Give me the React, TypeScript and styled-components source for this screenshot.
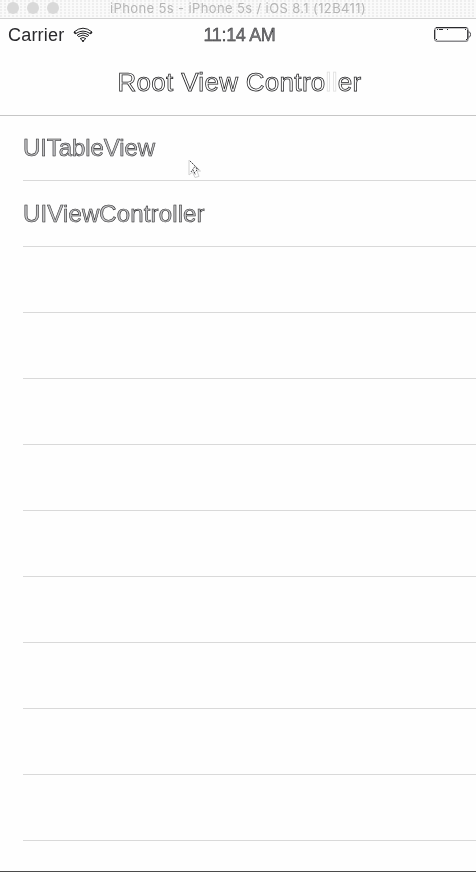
import React from "react";
import styled, { createGlobalStyle } from "styled-components";

const GlobalStyle = createGlobalStyle`
  * { box-sizing: border-box; }
  body { margin: 0; background: #fefefe; overflow: hidden; }
`;

const Window = styled.div`
  position: relative;
  display: flex;
  flex-direction: column;
  width: 476px;
  height: 872px;
  background: #fefefe;
  border-bottom: 1px solid #4b4b4b;
  font-family: "Liberation Sans", Arial, sans-serif;
  color: #29292c;
`;

/* Own layer, so that glyph edges are smoothed in grey. */
const Screen = styled.div`
  display: flex;
  flex: 1;
  flex-direction: column;
  will-change: transform, opacity;
  opacity: 0.999;
`;

const TitleBar = styled.header`
  display: grid;
  grid-template-columns: 60px 1fr 60px;
  align-items: center;
  flex: none;
  height: 19px;
  padding-bottom: 2px;
  border-bottom: 1px solid #d2d2d2;
  background-color: #fafafa;
  background-image: radial-gradient(circle at 1px 1px, #eeeeee 0.8px, transparent 1px);
  background-size: 4px 3px;
`;

const Lights = styled.div`
  display: flex;
  gap: 8px;
  padding-left: 7px;
`;

const Light = styled.span`
  width: 12px;
  height: 12px;
  border-radius: 50%;
  background: #d9d9d9;
`;

const Line = styled.svg`
  display: block;
  overflow: visible;
`;

const WindowTitle = styled.div`
  text-align: center;
  font: 400 13px/16px Inter, sans-serif;
  letter-spacing: 0.38px;
  color: #b5b5b5;
  white-space: nowrap;
`;

const StatusBar = styled.div`
  display: grid;
  grid-template-columns: 1fr auto 1fr;
  align-items: center;
  flex: none;
  height: 31px;
  padding: 0 5px 0 8px;
  font-size: 18px;
  line-height: 31px;
`;

const Carrier = styled.div`
  display: flex;
  align-items: center;
  gap: 9px;
  height: 31px;
  letter-spacing: 0.2px;
`;

const CarrierName = styled.span`
  padding-top: 2px;
`;

const Clock = styled.div`
  padding-top: 1px;
  height: 31px;
  line-height: 30px;
  letter-spacing: -0.35px;
  color: #77777a;
  -webkit-text-stroke: 0.35px #1c1c1e;
`;

const BatterySlot = styled.div`
  display: flex;
  justify-content: flex-end;
`;

const NavBar = styled.h1`
  flex: none;
  height: 66px;
  margin: 0;
  padding-left: 3px;
  border-bottom: 1px solid #c6c6c6;
  text-align: center;
  font-size: 26px;
  font-weight: 400;
  line-height: 64px;
  letter-spacing: 0.3px;
  color: #fefefe;
  -webkit-text-stroke: 0.75px #1c1c1e;
`;

const FadedLetters = styled.span`
  -webkit-text-stroke-color: #dedede;
`;

const Table = styled.ul`
  flex: 1;
  margin: 0;
  padding: 0 0 0 23px;
  list-style: none;
`;

const Cell = styled.li`
  height: 66px;
  border-bottom: 1px solid #d9d9d9;
  font-size: 24px;
  line-height: 65px;
  color: #c4c4c6;
  -webkit-text-stroke: 0.55px #1c1c1e;

  &:first-child {
    height: 65px;
    line-height: 63px;
  }
`;

const CellLabel = styled.span<{ $tracking: number }>`
  letter-spacing: ${(p) => p.$tracking}px;
`;

const Pointer = styled.svg`
  position: absolute;
  left: 187px;
  top: 158px;
`;

const rows = [
  { label: "UITableView", tracking: -0.1 },
  { label: "UIViewController", tracking: 0.13 },
  ...Array.from({ length: 9 }, () => ({ label: "", tracking: 0 })),
];

function WifiIcon() {
  return (
    <Line width="20" height="14" viewBox="0 0 20 14" fill="none" stroke="#1c1c1e" strokeWidth="1">
      <path d="M1 4Q10-3.6 19 4L17.3 5.6Q10 0.6 2.7 5.6Z" />
      <path d="M4.2 7.2Q10 2.9 15.8 7.2L14.3 8.6Q10 5.6 5.7 8.6Z" />
      <path d="M7.2 10.6Q10 8.4 12.8 10.6L10 13.2Z" />
      <path d="M1 4.2L2.8 5.6M19 4.2L17.2 5.6M9 13H11" strokeWidth="1.7" />
    </Line>
  );
}

function BatteryIcon() {
  return (
    <Line width="37" height="15" viewBox="0 0 37 15" fill="none">
      <rect x="0.8" y="0.8" width="33" height="13.4" rx="2" stroke="#8a8a8d" strokeWidth="1.4" />
      <path d="M2 0.5H32.5M0.6 3V12M33.8 3V12" stroke="#29292c" />
      <path d="M3 2.5H4M5 2.5H9M13 2.5H14M31 2.5H32M2 12.5H3M32 12.5H33" stroke="#29292c" />
      <path d="M34.5 5H35.2Q36.5 5 36.5 7.5T35.2 10H34.5" stroke="#444447" />
    </Line>
  );
}

export default function App() {
  return (
    <>
      <GlobalStyle />
      <Window>
        <Screen>
          <TitleBar>
            <Lights>
              <Light />
              <Light />
              <Light />
            </Lights>
            <WindowTitle>iPhone 5s - iPhone 5s / iOS 8.1 (12B411)</WindowTitle>
          </TitleBar>
          <StatusBar>
            <Carrier>
              <CarrierName>Carrier</CarrierName>
              <WifiIcon />
            </Carrier>
            <Clock>11:14 AM</Clock>
            <BatterySlot>
              <BatteryIcon />
            </BatterySlot>
          </StatusBar>
          <NavBar>
            Root View Contro<FadedLetters>ll</FadedLetters>er
          </NavBar>
          <Table>
            {rows.map((row, i) => (
              <Cell key={i}>
                <CellLabel $tracking={row.tracking}>{row.label}</CellLabel>
              </Cell>
            ))}
          </Table>
        </Screen>
        <Pointer width="15" height="21" viewBox="0 0 15 21" fill="none">
          <path d="M2 2V17L5.5 14L8 19.5L12 18.4L10 13H13.5Z" fill="#fefefe" stroke="#d0d0d0" />
          <path
            d="M3 3L12 12M4 14L7.5 9L11 12M6 12L8.5 17M10 12L7 15"
            stroke="#444447"
            strokeDasharray="1.6 1"
          />
        </Pointer>
      </Window>
    </>
  );
}
